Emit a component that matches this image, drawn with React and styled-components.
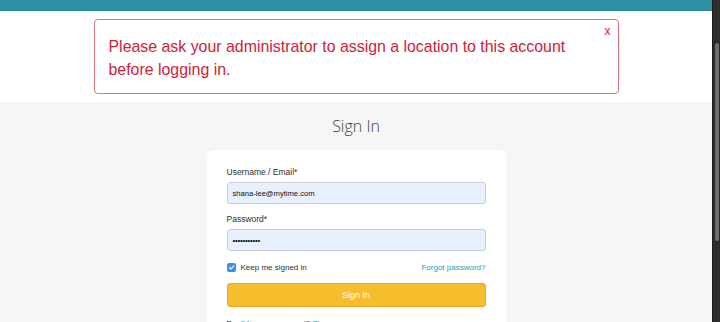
import React from "react";
import styled, { createGlobalStyle } from "styled-components";

const GlobalStyle = createGlobalStyle`
  html, body {
    margin: 0;
    padding: 0;
    overflow: hidden;
  }
  body {
    font-family: "Liberation Sans", Arial, sans-serif;
  }
`;

const Frame = styled.div`
  display: flex;
  width: 720px;
  height: 322px;
  overflow: hidden;
`;

const Page = styled.div`
  flex: 1;
  display: flex;
  flex-direction: column;
  background-color: #f6f6f6;
  overflow: hidden;

  > * {
    flex-shrink: 0;
  }
`;

const Scrollbar = styled.div`
  width: 8px;
  flex-shrink: 0;
  background-color: #2c2c2c;
  border-left: 1px solid #1f1f1f;
  padding-top: 43px;
  box-sizing: border-box;
  display: flex;
  justify-content: center;
`;

const Thumb = styled.div`
  width: 4px;
  height: 198px;
  border-radius: 2px;
  background-color: #6e6e6e;
`;

const TopBar = styled.div`
  height: 10px;
  background-color: #2e90a4;
  border-bottom: 1px solid #2a8397;
`;

const AlertBand = styled.div`
  background-color: #fff;
  padding: 8px 0;
  display: flex;
  justify-content: center;
`;

const Alert = styled.div`
  position: relative;
  width: 525px;
  box-sizing: border-box;
  border: 1px solid #e2737c;
  border-radius: 4px;
  padding: 15px 14px 12px;
  color: #cf2239;
  font-size: 15.9px;
  line-height: 23px;
`;

const Close = styled.span`
  position: absolute;
  top: 4px;
  right: 7px;
  font-size: 12px;
  line-height: 14px;
  color: #cf2239;
`;

const Main = styled.main`
  display: flex;
  flex-direction: column;
  align-items: center;
  padding-top: 14px;
`;

const Title = styled.h1`
  margin: 0 0 13px;
  font-family: "Open Sans", sans-serif;
  font-weight: 300;
  font-size: 16px;
  line-height: 21px;
  color: #3f3f3f;
`;

const Card = styled.div`
  width: 299px;
  box-sizing: border-box;
  background-color: #fff;
  border-radius: 6px;
  padding: 17px 20px 20px;
`;

const Label = styled.label`
  display: block;
  font-size: 8.5px;
  line-height: 11px;
  color: #2e2e2e;
  margin-bottom: 4px;
`;

const Input = styled.div`
  height: 22px;
  box-sizing: border-box;
  background-color: #e8f0fe;
  border: 1px solid #c9ced6;
  border-radius: 3px;
  padding: 0 5px;
  display: flex;
  align-items: center;
  font-size: ${props => (props.masked ? "8px" : "7.6px")};
  color: #111;
  margin-bottom: ${props => props.gap}px;
  letter-spacing: ${props => (props.masked ? "-0.3px" : "0")};
`;

const OptionsRow = styled.div`
  display: flex;
  align-items: center;
  justify-content: space-between;
  height: 12px;
  margin-bottom: 10px;
`;

const Remember = styled.div`
  display: flex;
  align-items: center;
  gap: 5px;
  font-size: 8px;
  color: #2e2e2e;
`;

const Check = styled.span`
  width: 9px;
  height: 9px;
  border-radius: 2px;
  background-color: #3b8ee6;
  display: flex;
  align-items: center;
  justify-content: center;
`;

const TextLink = styled.a`
  color: #2b9bb6;
  text-decoration: none;
  font-size: 8px;
`;

const Button = styled.button`
  display: block;
  width: 100%;
  height: 24px;
  background-color: #f6bd2c;
  border: 1px solid #eea81d;
  border-radius: 3px;
  color: #fff;
  font-family: "Liberation Sans", Arial, sans-serif;
  font-size: 9px;
  margin-bottom: 11px;
`;

const Footnote = styled.p`
  margin: 0;
  font-size: 8px;
  line-height: 11px;
  color: #2e2e2e;
`;

export default function App() {
  return (
    <Frame>
      <GlobalStyle />
      <Page>
        <TopBar />
        <AlertBand>
          <Alert>
            <Close>x</Close>
            Please ask your administrator to assign a location to this account
            <br />
            before logging in.
          </Alert>
        </AlertBand>
        <Main>
          <Title>Sign In</Title>
          <Card>
            <Label>Username / Email*</Label>
            <Input gap={10}>shana-lee@mytime.com</Input>
            <Label>Password*</Label>
            <Input masked gap={10}>•••••••••••</Input>
            <OptionsRow>
              <Remember>
                <Check>
                  <svg width="7" height="7" viewBox="0 0 10 10">
                    <path d="M2 5.2 L4.2 7.3 L8.2 2.8" fill="none" stroke="#fff" strokeWidth="1.6" strokeLinecap="round" strokeLinejoin="round" />
                  </svg>
                </Check>
                Keep me signed in
              </Remember>
              <TextLink href="#">Forgot password?</TextLink>
            </OptionsRow>
            <Button>Sign In</Button>
            <Footnote>
              Don't have an account? <TextLink href="#">Sign up</TextLink>
            </Footnote>
          </Card>
        </Main>
      </Page>
      <Scrollbar>
        <Thumb />
      </Scrollbar>
    </Frame>
  );
}
